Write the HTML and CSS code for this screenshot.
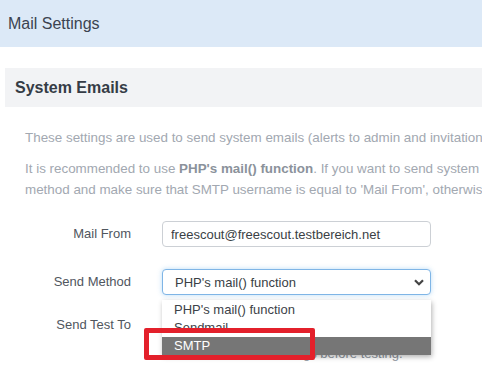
FILE: index.html
```html
<!DOCTYPE html>
<html lang="en">

<head>
    <meta charset="utf-8">
    <title>Mail Settings</title>
    <link rel="stylesheet" href="styles.css">
</head>

<body>
    <div class="page-header">Mail Settings</div>

    <div class="section">
        <h3 class="section-title">System Emails</h3>
        <div class="section-body">
            <p class="help-text">These settings are used to send system emails (alerts to admin and invitation emails to users).</p>
            <p class="help-text">It is recommended to use <strong>PHP's mail() function</strong>. If you want to send system emails via SMTP, choose SMTP<br>method and make sure that SMTP username is equal to 'Mail From', otherwise emails may be rejected.</p>
        </div>

        <form class="settings-form">
            <div class="form-row">
                <label class="form-label" for="mail-from">Mail From</label>
                <input id="mail-from" class="form-control" type="text" value="freescout@freescout.testbereich.net">
            </div>

            <div class="form-row">
                <label class="form-label">Send Method</label>
                <div class="select-wrap">
                    <div class="form-control select-box">
                        <span>PHP's mail() function</span>
                        <svg class="chevron" width="10" height="7" viewBox="0 0 10 7">
                            <path d="M1 1.2 L5 5.2 L9 1.2" fill="none" stroke="#444" stroke-width="2.2"/>
                        </svg>
                    </div>
                    <!-- open dropdown list -->
                    <ul class="select-list">
                        <li class="select-option">PHP's mail() function</li>
                        <li class="select-option clipped">Sendmail</li>
                        <li class="select-option active">SMTP</li>
                    </ul>
                </div>
            </div>

            <div class="form-row test-row">
                <label class="form-label" for="send-test">Send Test To</label>
                <div>
                    <input id="send-test" class="form-control" type="text">
                    <p class="field-help">Make sure to save settings before testing.</p>
                </div>
            </div>
        </form>
    </div>

    <div class="highlight-box"></div>
</body>

</html>
```

FILE: styles.css
```css
html {
    overflow: hidden;
}

body {
    font-family: "Liberation Sans", Arial, sans-serif;
    font-size: 13px;
    color: #333;
    margin: 0;
    padding: 0;
    position: relative;
    height: 378px;
    overflow: hidden;
}

.page-header {
    background-color: #dce9f7;
    height: 47px;
    padding-left: 8px;
    display: flex;
    align-items: center;
    font-size: 16px;
    color: #3b4350;
}

.section {
    margin-top: 21px;
    padding-left: 5px;
}

.section-title {
    margin: 0;
    background-color: #f2f3f5;
    height: 39px;
    padding-left: 10px;
    display: flex;
    align-items: center;
    font-size: 16px;
    font-weight: bold;
    color: #353c46;
}

.section-body {
    padding: 20px 0 0 20px;
}

.help-text {
    margin: 0 0 10px 0;
    font-size: 13.4px;
    line-height: 21px;
    color: #a2a8b1;
    white-space: nowrap;
}

.help-text strong {
    color: #8b929b;
}

.settings-form {
    margin-top: 21px;
}

.form-row {
    display: grid;
    grid-template-columns: 126px 269px;
    column-gap: 31px;
    align-items: start;
    margin-bottom: 22px;
}

.form-label {
    text-align: right;
    line-height: 26px;
    color: #50565e;
}

.form-control {
    box-sizing: border-box;
    width: 269px;
    height: 26px;
    border: 1px solid #ccd0d5;
    border-radius: 4px;
    padding: 0 8px;
    font-family: inherit;
    font-size: 13px;
    color: #3a3f45;
    background-color: white;
    margin: 0;
}

.select-wrap {
    position: relative;
}

.select-box {
    display: flex;
    align-items: center;
    justify-content: space-between;
    padding: 0 6px 0 12px;
    border-color: #7fb5e6;
    box-shadow: 0 0 5px rgba(102, 175, 233, 0.45);
}

.chevron {
    display: block;
}

.select-list {
    position: absolute;
    top: 31px;
    left: 0;
    width: 269px;
    height: 55px;
    margin: 0;
    padding: 1px 0 0 0;
    box-sizing: border-box;
    list-style: none;
    background-color: white;
    box-shadow: 1px 2px 5px rgba(0, 0, 0, 0.3);
    z-index: 10;
}

.select-option {
    height: 18px;
    line-height: 18px;
    padding-left: 12px;
    color: #3d4248;
    overflow: hidden;
}

.select-option.clipped {
    height: 13px;
    margin-bottom: 5px;
}

.select-option.active {
    background-color: #767676;
    color: white;
}

.test-row {
    margin-top: -5px;
}

.field-help {
    margin: 5px 0 0 0;
    line-height: 21px;
    color: #8e959e;
    white-space: nowrap;
}

.highlight-box {
    position: absolute;
    left: 144px;
    top: 328px;
    width: 171px;
    height: 32px;
    box-sizing: border-box;
    border: 5px solid #e3202b;
    border-radius: 2px;
    z-index: 20;
}
```
